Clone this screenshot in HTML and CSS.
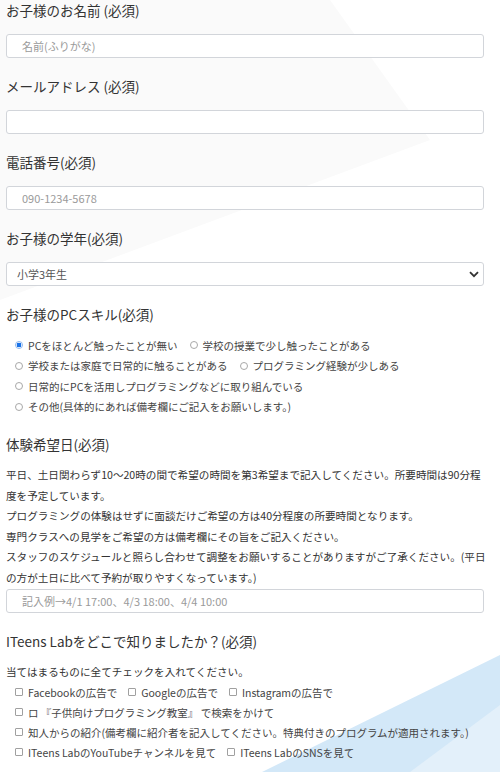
FILE: index.html
```html
<!DOCTYPE html>
<html lang="ja">
<head>
<meta charset="utf-8">
<title>体験申し込みフォーム</title>
<link rel="stylesheet" href="styles.css">
</head>
<body>
<div class="page">
  <svg class="bg" width="500" height="772" viewBox="0 0 500 772" aria-hidden="true">
    <polygon points="0,0 330,0 430,140 0,300" fill="#fafafa"/>
    <polygon points="500,655 500,772 262,772" fill="#d3e8f8"/>
    <polygon points="500,705 500,772 410,772" fill="#e3f0fa"/>
  </svg>
  <form class="form">
    <div class="field">
      <div class="label">お子様のお名前 (必須)</div>
      <input class="input" type="text" placeholder="名前(ふりがな)">
    </div>
    <div class="field">
      <div class="label">メールアドレス (必須)</div>
      <input class="input" type="email">
    </div>
    <div class="field">
      <div class="label">電話番号(必須)</div>
      <input class="input" type="tel" placeholder="090-1234-5678">
    </div>
    <div class="field">
      <div class="label">お子様の学年(必須)</div>
      <div class="select-wrap">
        <select class="select">
          <option>小学3年生</option>
        </select>
        <svg class="chev" width="10" height="7" viewBox="0 0 10 7"><path d="M1 1.2 L5 5.2 L9 1.2" fill="none" stroke="#333" stroke-width="1.8"/></svg>
      </div>
    </div>
    <div class="field">
      <div class="label">お子様のPCスキル(必須)</div>
      <div class="options">
        <div class="row">
          <span class="opt"><span class="radio checked"></span>PCをほとんど触ったことが無い</span>
          <span class="opt"><span class="radio"></span>学校の授業で少し触ったことがある</span>
        </div>
        <div class="row">
          <span class="opt"><span class="radio"></span>学校または家庭で日常的に触ることがある</span>
          <span class="opt"><span class="radio"></span>プログラミング経験が少しある</span>
        </div>
        <div class="row">
          <span class="opt"><span class="radio"></span>日常的にPCを活用しプログラミングなどに取り組んでいる</span>
        </div>
        <div class="row">
          <span class="opt"><span class="radio"></span>その他(具体的にあれば備考欄にご記入をお願いします。)</span>
        </div>
      </div>
    </div>
    <div class="field field-date">
      <div class="label">体験希望日(必須)</div>
      <p class="note">平日、土日関わらず10～20時の間で希望の時間を第3希望まで記入してください。所要時間は90分程<br>度を予定しています。<br>プログラミングの体験はせずに面談だけご希望の方は40分程度の所要時間となります。<br>専門クラスへの見学をご希望の方は備考欄にその旨をご記入ください。<br>スタッフのスケジュールと照らし合わせて調整をお願いすることがありますがご了承ください。(平日<br>の方が土日に比べて予約が取りやすくなっています。)</p>
      <input class="input" type="text" placeholder="記入例→4/1 17:00、4/3 18:00、4/4 10:00">
    </div>
    <div class="field">
      <div class="label">ITeens Labをどこで知りましたか？(必須)</div>
      <p class="note note-short">当てはまるものに全てチェックを入れてください。</p>
      <div class="checks">
        <div class="row">
          <span class="opt"><span class="check"></span>Facebookの広告で</span>
          <span class="opt"><span class="check"></span>Googleの広告で</span>
          <span class="opt"><span class="check"></span>Instagramの広告で</span>
        </div>
        <div class="row">
          <span class="opt"><span class="check"></span>ロ 『子供向けプログラミング教室』 で検索をかけて</span>
        </div>
        <div class="row">
          <span class="opt"><span class="check"></span>知人からの紹介(備考欄に紹介者を記入してください。特典付きのプログラムが適用されます。)</span>
        </div>
        <div class="row">
          <span class="opt"><span class="check"></span>ITeens LabのYouTubeチャンネルを見て</span>
          <span class="opt"><span class="check"></span>ITeens LabのSNSを見て</span>
        </div>
      </div>
    </div>
  </form>
</div>
</body>
</html>
```
FILE: styles.css
```css
* { box-sizing: border-box; }
html, body {
  margin: 0;
  padding: 0;
  background: #ffffff;
}
body {
  font-family: "Noto Sans CJK JP", "Noto Sans", sans-serif;
  color: #333333;
  width: 500px;
  height: 772px;
  overflow: hidden;
}
.page {
  position: relative;
  width: 500px;
  height: 772px;
}
.bg {
  position: absolute;
  left: 0;
  top: 0;
  z-index: 0;
}
.form {
  position: relative;
  z-index: 1;
  padding: 0 4px 0 6px;
  display: flex;
  flex-direction: column;
}
.field {
  display: flex;
  flex-direction: column;
  margin-bottom: 18px;
}
.label {
  font-size: 13.5px;
  line-height: 20px;
  color: #333333;
  margin-bottom: 14px;
  white-space: nowrap;
}
.input, .select {
  display: block;
  width: 478px;
  height: 24px;
  border: 1px solid #d2d5da;
  border-radius: 3px;
  background: #ffffff;
  font-family: "Noto Sans CJK JP", "Noto Sans", sans-serif;
  font-size: 11px;
  color: #555555;
  padding: 0 0 0 15px;
  outline: none;
  margin: 0;
}
.input::placeholder {
  color: #9a9a9a;
}
.select-wrap {
  position: relative;
  width: 478px;
}
.select {
  -webkit-appearance: none;
  appearance: none;
  padding-left: 10px;
  color: #555555;
}
.chev {
  position: absolute;
  right: 5px;
  top: 9px;
}
.options {
  display: flex;
  flex-direction: column;
  margin-top: -3px;
  margin-bottom: -1px;
}
.row {
  display: flex;
  align-items: center;
  height: 20.5px;
  padding-left: 9px;
  font-size: 10.5px;
  color: #444444;
  white-space: nowrap;
}
.opt {
  display: inline-flex;
  align-items: center;
  margin-right: 12px;
}
.radio {
  width: 8px;
  height: 8px;
  border: 1px solid #a8a8a8;
  border-radius: 50%;
  margin-right: 5px;
  background: #fff;
  flex: none;
}
.radio.checked {
  border: 1px solid #8fb8ee;
  background: radial-gradient(circle, #1a73e8 0 2.2px, #ffffff 2.6px);
}
.check {
  width: 8px;
  height: 8px;
  border: 1px solid #a0a0a0;
  border-radius: 1px;
  margin-right: 5px;
  background: #fff;
  flex: none;
}
.field-date .label {
  margin-bottom: 11px;
}
.note {
  margin: 0;
  font-size: 10.6px;
  line-height: 20.6px;
  color: #333333;
  width: 490px;
  white-space: nowrap;
}
.note-short {
  margin-top: -3px;
}
.checks {
  display: flex;
  flex-direction: column;
}
.checks .row {
  height: 20px;
}
.checks .opt {
  margin-right: 11px;
}
```
